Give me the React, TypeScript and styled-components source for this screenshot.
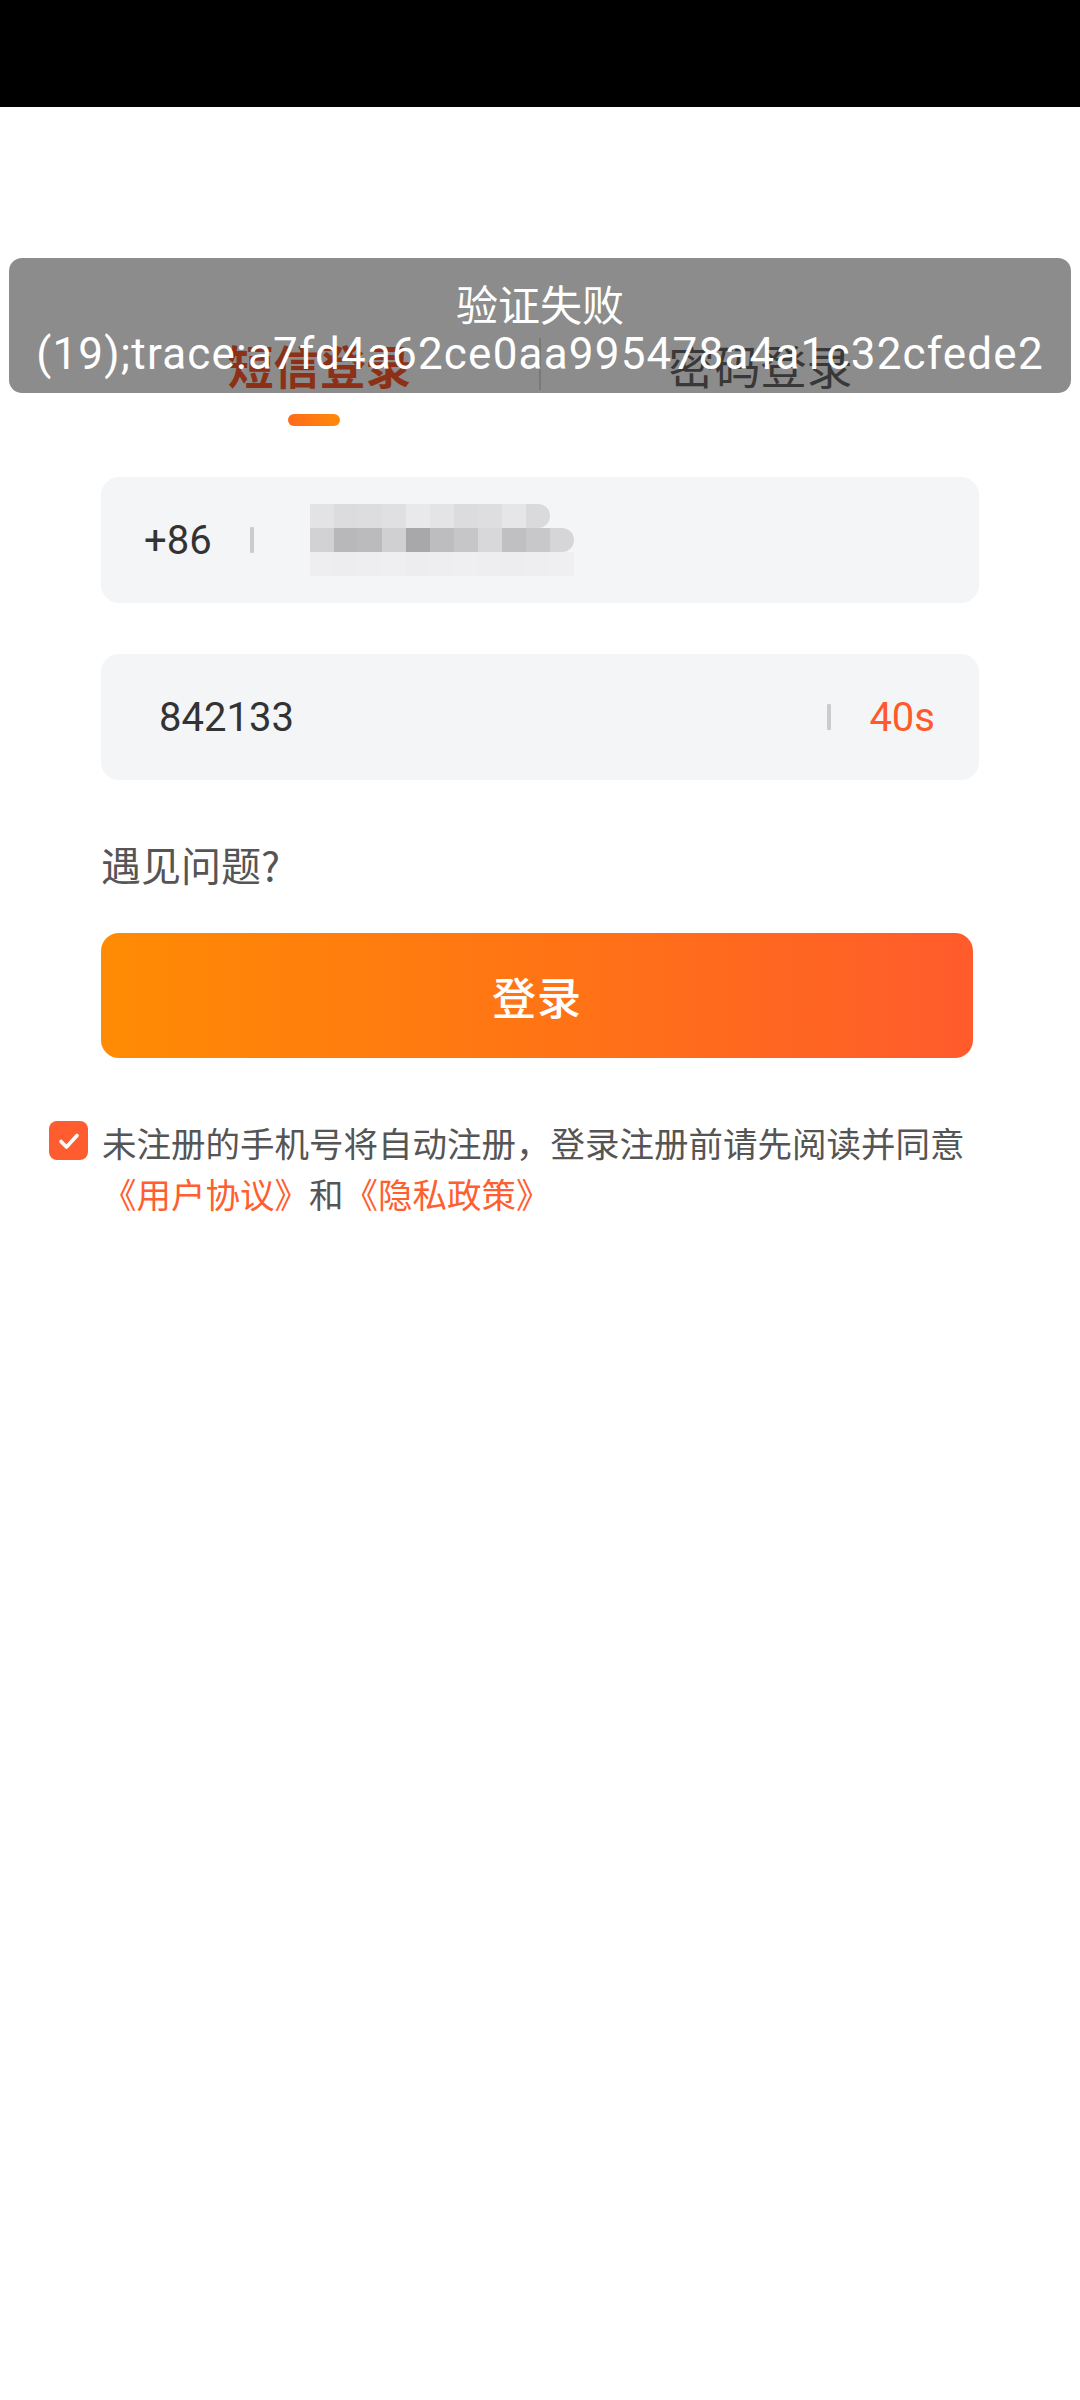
import React from "react";
import styled, { createGlobalStyle } from "styled-components";

const GlobalStyle = createGlobalStyle`
  html, body { margin: 0; padding: 0; background: #ffffff; }
  body { font-family: Roboto, "Noto Sans CJK SC", "Noto Sans", sans-serif; }
  * { box-sizing: border-box; }
`;

const Screen = styled.div`
  position: relative;
  width: 1080px;
  min-height: 2400px;
  background: #ffffff;
`;

const StatusBar = styled.div`
  height: 107px;
  background: #000000;
`;

const TabBar = styled.div`
  display: flex;
  align-items: flex-start;
  width: 880px;
  margin: 225px auto 0;
`;

const Tab = styled.div`
  flex: 1;
  display: flex;
  flex-direction: column;
  align-items: center;
`;

const TabLabel = styled.div<{ $active?: boolean }>`
  font-family: "Noto Sans CJK SC", sans-serif;
  font-size: 46px;
  line-height: 64px;
  font-weight: ${(p) => (p.$active ? 700 : 400)};
  color: ${(p) => (p.$active ? "#ff5a2c" : "#666666")};
`;

const TabIndicator = styled.div<{ $active?: boolean }>`
  margin-top: 18px;
  margin-left: -12px;
  width: 52px;
  height: 12px;
  border-radius: 6px;
  background: linear-gradient(90deg, #ff6a1a, #ff8a0a);
  visibility: ${(p) => (p.$active ? "visible" : "hidden")};
`;

const TabDivider = styled.div`
  width: 2px;
  height: 52px;
  margin-top: 6px;
  background: #dddddd;
`;

const Form = styled.div`
  display: flex;
  flex-direction: column;
  padding: 0 101px;
`;

const Field = styled.div<{ $top: number; $padLeft: number }>`
  display: flex;
  align-items: center;
  height: 126px;
  margin-top: ${(p) => p.$top}px;
  padding: 0 44px 0 ${(p) => p.$padLeft}px;
  background: #f4f5f7;
  border-radius: 18px;
`;

const FieldText = styled.span`
  font-family: Roboto, "Noto Sans CJK SC", sans-serif;
  font-size: 40px;
  color: #333333;
`;

const Bar = styled.span<{ $gap: number }>`
  width: 4px;
  height: 26px;
  margin: 0 ${(p) => p.$gap}px;
  background: #cccccc;
  border-radius: 1px;
`;

const Spacer = styled.span`
  flex: 1;
`;

const Countdown = styled.span`
  margin-left: 38px;
  font-family: Roboto, sans-serif;
  font-size: 40px;
  color: #ff5a2c;
`;

const Mosaic = styled.div`
  display: flex;
  flex-direction: column;
  margin-left: 18px;
  filter: blur(0.4px);
`;

const MosaicRow = styled.div`
  display: flex;
  height: 24px;
`;

const Block = styled.span<{ $round?: boolean }>`
  width: 24px;
  height: 100%;
  border-radius: ${(p) => (p.$round ? "0 12px 12px 0" : "0")};
`;

const Help = styled.div`
  margin-top: 64px;
  font-family: "Noto Sans CJK SC", sans-serif;
  font-size: 40px;
  line-height: 40px;
  color: #555555;
`;

const LoginButton = styled.button`
  margin-top: 49px;
  width: 872px;
  height: 125px;
  border: none;
  border-radius: 18px;
  background: linear-gradient(90deg, #ff8b04 0%, #ff7216 55%, #ff5b2c 100%);
  color: #ffffff;
  font-family: "Noto Sans CJK SC", sans-serif;
  font-size: 44px;
  font-weight: 500;
  letter-spacing: 1px;
  padding: 0;
`;

const Agreement = styled.div`
  display: flex;
  align-items: flex-start;
  margin-top: 61px;
  padding: 0 100px 0 49px;
`;

const CheckBox = styled.div`
  flex: none;
  width: 39px;
  height: 39px;
  margin-top: 2px;
  margin-right: 14px;
  border-radius: 8px;
  background: #ff5c2f;
  display: flex;
  align-items: center;
  justify-content: center;
`;

const AgreementText = styled.p`
  margin: -2px 0 0;
  font-family: "Noto Sans CJK SC", sans-serif;
  font-size: 34.5px;
  line-height: 51px;
  color: #555555;
`;

const Link = styled.span`
  color: #ff5e30;
  white-space: nowrap;
`;

const Toast = styled.div`
  position: absolute;
  top: 258px;
  left: 9px;
  right: 9px;
  height: 135px;
  padding-top: 20px;
  border-radius: 13px;
  background: rgba(0, 0, 0, 0.45);
  color: #ffffff;
  text-align: center;
`;

const ToastTitle = styled.div`
  font-family: "Noto Sans CJK SC", sans-serif;
  font-size: 42px;
  line-height: 50px;
`;

const ToastDetail = styled.div`
  font-family: Roboto, sans-serif;
  font-size: 44px;
  letter-spacing: 1.2px;
  line-height: 52px;
  white-space: nowrap;
`;

const mosaicRows: string[][] = [
  ["#e3e3e5", "#dcdcde", "#dddddf", "#e0e0e2", "#e9e9eb", "#e4e4e6", "#dcdcde", "#dedee0", "#e6e6e8", "#dadadc"],
  ["#d2d2d4", "#b8b8ba", "#bbbbbd", "#d0d0d2", "#a8a8aa", "#bdbdbf", "#c6c6c8", "#d8d8da", "#c0c0c2", "#c8c8ca", "#d6d6d8"],
  ["#eeeef0", "#ededef", "#eeeef0", "#efeff1", "#ededef", "#eeeef0", "#efeff1", "#eeeef0", "#ededef", "#eeeef0", "#efeff1"],
];

export default function App() {
  return (
    <Screen>
      <GlobalStyle />
      <StatusBar />
      <TabBar>
        <Tab>
          <TabLabel $active>短信登录</TabLabel>
          <TabIndicator $active />
        </Tab>
        <TabDivider />
        <Tab>
          <TabLabel>密码登录</TabLabel>
          <TabIndicator />
        </Tab>
      </TabBar>
      <Form>
        <Field $top={51} $padLeft={43}>
          <FieldText>+86</FieldText>
          <Bar $gap={38} />
          <Mosaic>
            {mosaicRows.map((row, i) => (
              <MosaicRow key={i}>
                {row.map((c, j) => (
                  <Block
                    key={j}
                    $round={i < 2 && j === row.length - 1}
                    style={{ background: c }}
                  />
                ))}
              </MosaicRow>
            ))}
          </Mosaic>
        </Field>
        <Field $top={51} $padLeft={58}>
          <FieldText>842133</FieldText>
          <Spacer />
          <Bar $gap={0} />
          <Countdown>40s</Countdown>
        </Field>
        <Help>遇见问题?</Help>
        <LoginButton>登录</LoginButton>
      </Form>
      <Agreement>
        <CheckBox>
          <svg width="24" height="24" viewBox="0 0 24 24">
            <polyline
              points="4,12.5 9.5,18 20,6.5"
              fill="none"
              stroke="#ffffff"
              strokeWidth="3.6"
              strokeLinecap="round"
              strokeLinejoin="round"
            />
          </svg>
        </CheckBox>
        <AgreementText>
          未注册的手机号将自动注册，登录注册前请先阅读并同意
          <Link>《用户协议》</Link>和<Link>《隐私政策》</Link>
        </AgreementText>
      </Agreement>
      <Toast>
        <ToastTitle>验证失败</ToastTitle>
        <ToastDetail>(19);trace:a7fd4a62ce0aa995478a4a1c32cfede2</ToastDetail>
      </Toast>
    </Screen>
  );
}
